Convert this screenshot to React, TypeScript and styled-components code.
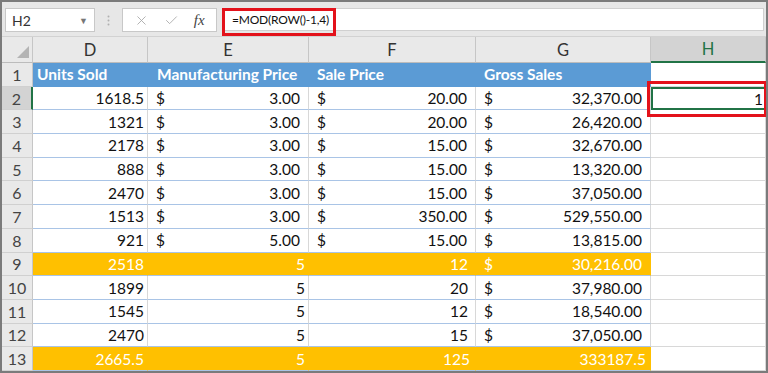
import React from 'react';
import styled, { createGlobalStyle } from 'styled-components';
import { X, Check } from 'lucide-react';

const GlobalStyle = createGlobalStyle`
  body {
    margin: 0;
    background: #ffffff;
    font-family: Lato, "Open Sans", sans-serif;
  }
`;

const Frame = styled.div`
  width: 768px;
  height: 373px;
  box-sizing: border-box;
  border: 2px solid #7b7b7b;
  background: #e7e7e7;
  overflow: hidden;
`;

const FormulaBar = styled.div`
  display: flex;
  align-items: flex-start;
  height: 35px;
  box-sizing: border-box;
  padding: 6px 2px 0 3px;
  border-bottom: 1px solid #d2d2d2;
`;

const NameBox = styled.div`
  width: 90px;
  height: 24px;
  box-sizing: border-box;
  background: #ffffff;
  border: 1px solid #c8c8c8;
  display: flex;
  align-items: center;
  justify-content: space-between;
  padding: 0 6px 0 6px;
  font-size: 14px;
  color: #333333;
`;

const Caret = styled.span`
  font-size: 9px;
  color: #777777;
`;

const Dots = styled.div`
  width: 27px;
  height: 24px;
  display: flex;
  align-items: center;
  justify-content: center;
`;

const FxBox = styled.div`
  width: 95px;
  height: 24px;
  box-sizing: border-box;
  background: #ffffff;
  border: 1px solid #c8c8c8;
  display: flex;
  align-items: center;
  justify-content: space-around;
  padding: 0 4px;
  color: #a8a8a8;
`;

const Fx = styled.span`
  font-family: "Liberation Serif", serif;
  font-style: italic;
  font-size: 15px;
  color: #444444;
`;

const FormulaInput = styled.div`
  position: relative;
  flex: 1;
  margin-left: 5px;
  height: 23px;
  box-sizing: border-box;
  background: #ffffff;
  border: 1px solid #d0d0d0;
  display: flex;
  align-items: center;
  padding-left: 9px;
  font-size: 12px;
  letter-spacing: -0.2px;
  color: #111111;
`;

const RedBox = styled.span<{ $top: number; $left: number; $w: number; $h: number }>`
  position: absolute;
  z-index: 3;
  top: ${p => p.$top}px;
  left: ${p => p.$left}px;
  width: ${p => p.$w}px;
  height: ${p => p.$h}px;
  box-sizing: border-box;
  border: 3px solid #e3121b;
  pointer-events: none;
`;

const Sheet = styled.div`
  display: grid;
  grid-template-columns: 31px 115px 161px 167px 175px 1fr;
  grid-template-rows: 26px;
  grid-auto-rows: 23.7px;
  background: #ffffff;
`;

const Corner = styled.div`
  background: #e9e9e9;
  border-right: 1px solid #c6c6c6;
  border-bottom: 1px solid #bcbcbc;
  display: flex;
  align-items: flex-end;
  justify-content: flex-end;
  padding: 0 3px 4px 0;
`;

const ColHead = styled.div<{ $active?: boolean }>`
  background: ${p => (p.$active ? '#d3d3d3' : '#e9e9e9')};
  border-right: 1px solid #c6c6c6;
  border-bottom: ${p => (p.$active ? '2px solid #217346' : '1px solid #bcbcbc')};
  display: flex;
  align-items: center;
  justify-content: center;
  font-size: 16.5px;
  color: ${p => (p.$active ? '#217346' : '#333333')};
`;

const RowHead = styled.div<{ $active?: boolean }>`
  background: ${p => (p.$active ? '#d3d3d3' : '#e9e9e9')};
  border-right: ${p => (p.$active ? '2px solid #217346' : '1px solid #c6c6c6')};
  border-bottom: 1px solid #d0d0d0;
  display: flex;
  align-items: center;
  justify-content: center;
  font-size: 16px;
  color: #444444;
`;

type Tone = 'head' | 'band' | 'plain';

const toneBg: Record<Tone, string> = {
  head: '#5b9bd5',
  band: '#ffc000',
  plain: '#ffffff',
};

const Cell = styled.div<{ $tone: Tone; $align?: 'left' | 'right'; $pl?: number; $pr?: number }>`
  position: relative;
  box-sizing: border-box;
  background: ${p => toneBg[p.$tone]};
  color: ${p => (p.$tone === 'plain' ? '#111111' : '#ffffff')};
  font-weight: ${p => (p.$tone === 'head' ? 700 : 400)};
  font-size: 15.5px;
  display: flex;
  align-items: center;
  justify-content: ${p => (p.$align === 'left' ? 'flex-start' : 'flex-end')};
  padding-left: ${p => p.$pl ?? 4}px;
  padding-right: ${p => p.$pr ?? 3}px;
  border-right: 1px solid ${p => (p.$tone === 'plain' ? '#d8d8d8' : toneBg[p.$tone])};
  border-bottom: 1px solid ${p => (p.$tone === 'head' ? '#5b9bd5' : '#a9c4e6')};
  white-space: nowrap;
`;

const Acct = styled(Cell)`
  justify-content: space-between;
`;

const Blank = styled.div<{ $selected?: boolean }>`
  position: relative;
  box-sizing: border-box;
  background: #ffffff;
  border-right: 1px solid #d8d8d8;
  border-bottom: 1px solid #d8d8d8;
  display: flex;
  align-items: center;
  justify-content: flex-end;
  padding-right: 3px;
  font-size: 15.5px;
  color: #111111;
  ${p => p.$selected && `
    border: 2px solid #217346;
    padding-right: 1px;
  `}
`;

type Val = { kind: 'num'; v: string; pr?: number } | { kind: 'acct'; v: string };

const n = (v: string, pr?: number): Val => ({ kind: 'num', v, pr });
const a = (v: string): Val => ({ kind: 'acct', v });

const rows: { band?: boolean; cells: Val[] }[] = [
  { cells: [n('1618.5'), a('3.00'), a('20.00'), a('32,370.00')] },
  { cells: [n('1321'), a('3.00'), a('20.00'), a('26,420.00')] },
  { cells: [n('2178'), a('3.00'), a('15.00'), a('32,670.00')] },
  { cells: [n('888'), a('3.00'), a('15.00'), a('13,320.00')] },
  { cells: [n('2470'), a('3.00'), a('15.00'), a('37,050.00')] },
  { cells: [n('1513'), a('3.00'), a('350.00'), a('529,550.00')] },
  { cells: [n('921'), a('5.00'), a('15.00'), a('13,815.00')] },
  { band: true, cells: [n('2518'), n('5'), n('12', 7), a('30,216.00')] },
  { cells: [n('1899'), n('5'), n('20', 7), a('37,980.00')] },
  { cells: [n('1545'), n('5'), n('12', 7), a('18,540.00')] },
  { cells: [n('2470'), n('5'), n('15', 7), a('37,050.00')] },
  { band: true, cells: [n('2665.5'), n('5'), n('125', 5), n('333187.5', 4)] },
];

const headers = [
  { label: 'Units Sold', pl: 4 },
  { label: 'Manufacturing Price', pl: 9 },
  { label: 'Sale Price', pl: 8 },
  { label: 'Gross Sales', pl: 8 },
];

export default function App() {
  return (
    <>
      <GlobalStyle />
      <Frame>
        <FormulaBar>
          <NameBox>
            <span>H2</span>
            <Caret>▼</Caret>
          </NameBox>
          <Dots>
            <svg width="3" height="11" viewBox="0 0 3 11">
              <circle cx="1.5" cy="1.5" r="1" fill="#b0b0b0" />
              <circle cx="1.5" cy="5.5" r="1" fill="#b0b0b0" />
              <circle cx="1.5" cy="9.5" r="1" fill="#b0b0b0" />
            </svg>
          </Dots>
          <FxBox>
            <X size={15} strokeWidth={1.4} />
            <Check size={15} strokeWidth={1.4} />
            <Fx>fx</Fx>
          </FxBox>
          <FormulaInput>
            =MOD(ROW()-1,4)
            <RedBox $top={-1} $left={-1} $w={114} $h={28} />
          </FormulaInput>
        </FormulaBar>

        <Sheet>
          <Corner>
            <svg width="12" height="12" viewBox="0 0 12 12">
              <polygon points="12,0 12,12 0,12" fill="#b4b4b4" />
            </svg>
          </Corner>
          {['D', 'E', 'F', 'G', 'H'].map(c => (
            <ColHead key={c} $active={c === 'H'}>{c}</ColHead>
          ))}

          <RowHead>1</RowHead>
          {headers.map(h => (
            <Cell key={h.label} $tone="head" $align="left" $pl={h.pl}>{h.label}</Cell>
          ))}
          <Blank />

          {rows.map((row, i) => {
            const num = i + 2;
            const tone: Tone = row.band ? 'band' : 'plain';
            return (
              <React.Fragment key={num}>
                <RowHead $active={num === 2}>{num}</RowHead>
                {row.cells.map((c, j) =>
                  c.kind === 'acct' ? (
                    <Acct key={j} $tone={tone} $pl={8} $pr={8}>
                      <span>$</span>
                      <span>{c.v}</span>
                    </Acct>
                  ) : (
                    <Cell key={j} $tone={tone} $pr={c.pr}>{c.v}</Cell>
                  )
                )}
                {num === 2 ? (
                  <Blank $selected>
                    1
                    <RedBox $top={-8} $left={-6} $w={120} $h={36} />
                  </Blank>
                ) : (
                  <Blank />
                )}
              </React.Fragment>
            );
          })}
        </Sheet>
      </Frame>
    </>
  );
}
